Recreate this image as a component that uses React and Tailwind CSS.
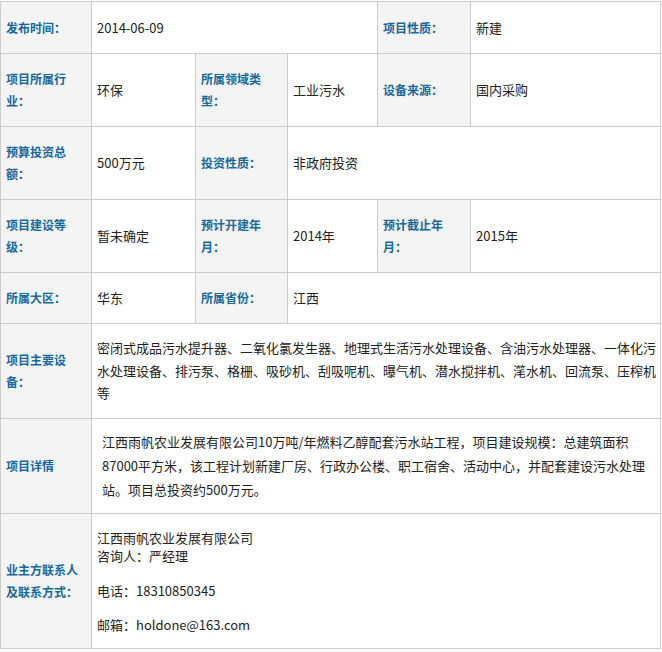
import React from "react";

const font = { fontFamily: '"Noto Sans CJK SC", "Noto Sans", sans-serif' };

function Label({ children }) {
  return (
    <td className="border border-[#cccccc] bg-[#f4f4f4] px-[5px] align-middle text-[12px] font-bold leading-[22px] text-[#17689b]">
      {children}
    </td>
  );
}

function Value({ children, colSpan, className = "px-[5px] leading-[22px]" }) {
  return (
    <td
      colSpan={colSpan}
      className={`border border-[#cccccc] bg-white align-middle text-[13px] text-[#222222] ${className}`}
    >
      {children}
    </td>
  );
}

export default function App() {
  return (
    <div className="bg-white w-[662px] h-[652px] pt-px" style={font}>
      <table className="w-[660px] table-fixed border-collapse">
        <colgroup>
          <col className="w-[91px]" />
          <col className="w-[104px]" />
          <col className="w-[92px]" />
          <col className="w-[90px]" />
          <col className="w-[93px]" />
          <col className="w-[190px]" />
        </colgroup>
        <tbody>
          <tr className="h-[52px]">
            <Label>发布时间：</Label>
            <Value colSpan={3}>2014-06-09</Value>
            <Label>项目性质：</Label>
            <Value>新建</Value>
          </tr>
          <tr className="h-[73px]">
            <Label>项目所属行业：</Label>
            <Value>环保</Value>
            <Label>所属领域类型：</Label>
            <Value>工业污水</Value>
            <Label>设备来源：</Label>
            <Value>国内采购</Value>
          </tr>
          <tr className="h-[73px]">
            <Label>预算投资总额：</Label>
            <Value>500万元</Value>
            <Label>投资性质：</Label>
            <Value colSpan={3}>非政府投资</Value>
          </tr>
          <tr className="h-[73px]">
            <Label>项目建设等级：</Label>
            <Value>暂未确定</Value>
            <Label>预计开建年月：</Label>
            <Value>2014年</Value>
            <Label>预计截止年月：</Label>
            <Value>2015年</Value>
          </tr>
          <tr className="h-[51px]">
            <Label>所属大区：</Label>
            <Value>华东</Value>
            <Label>所属省份：</Label>
            <Value colSpan={3}>江西</Value>
          </tr>
          <tr className="h-[95px]">
            <Label>项目主要设备：</Label>
            <Value colSpan={5} className="pl-[5px] pr-px leading-[22.5px]">
              密闭式成品污水提升器、二氧化氯发生器、地理式生活污水处理设备、含油污水处理器、一体化污水处理设备、排污泵、格栅、吸砂机、刮吸呢机、曝气机、潜水搅拌机、滗水机、回流泵、压榨机等
            </Value>
          </tr>
          <tr className="h-[95px]">
            <Label>项目详情</Label>
            <Value colSpan={5} className="pl-[10px] pr-[9px] leading-[24px]">
              江西雨帆农业发展有限公司10万吨/年燃料乙醇配套污水站工程，项目建设规模：总建筑面积87000平方米，该工程计划新建厂房、行政办公楼、职工宿舍、活动中心，并配套建设污水处理站。项目总投资约500万元。
            </Value>
          </tr>
          <tr className="h-[135px]">
            <Label>业主方联系人及联系方式：</Label>
            <Value colSpan={5} className="px-[5px] leading-[18px]">
              <div>江西雨帆农业发展有限公司</div>
              <div>咨询人：严经理</div>
              <div className="mt-[17px]">电话：18310850345</div>
              <div className="mt-[16px]">邮箱：holdone@163.com</div>
            </Value>
          </tr>
        </tbody>
      </table>
    </div>
  );
}
